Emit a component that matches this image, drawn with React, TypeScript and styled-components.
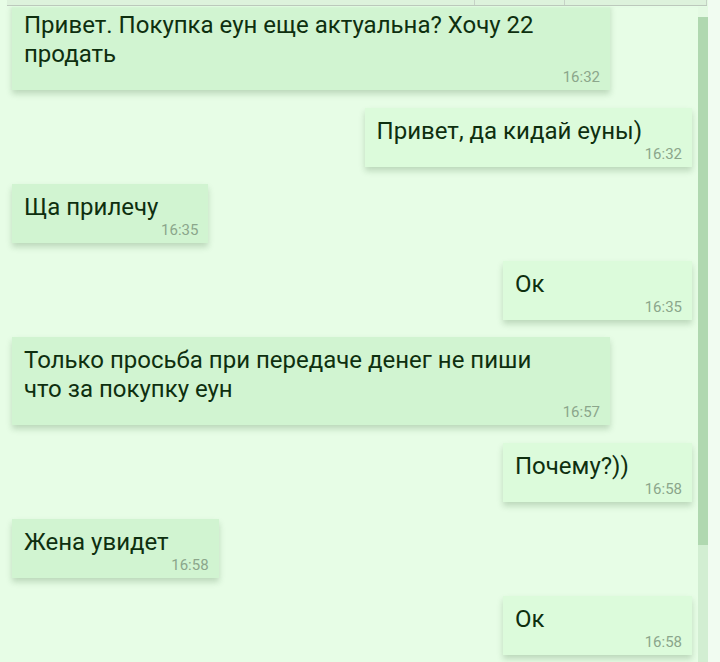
import React from "react";
import styled, { createGlobalStyle } from "styled-components";

const GlobalStyle = createGlobalStyle`
  html, body {
    margin: 0;
    padding: 0;
    background: #e7fde6;
  }
  body {
    font-family: Roboto, "Noto Sans", "Liberation Sans", sans-serif;
  }
`;

const Screen = styled.div`
  position: relative;
  display: flex;
  width: 720px;
  height: 662px;
  overflow: hidden;
  background: #e7fde6;
`;

const TopBar = styled.div`
  position: absolute;
  top: 0;
  left: 7px;
  width: 700px;
  height: 5px;
  display: grid;
  grid-template-columns: 468px 90px 1fr;
  background: #ddf2dc;
  border-bottom: 1px solid #bcc8bc;
  box-shadow: 0 1px 2px rgba(230, 253, 230, 0.9);
  z-index: 2;
`;

const TopCell = styled.div`
  border-right: 1px solid #c6d2c6;
`;

const MessageList = styled.div`
  flex: 1;
  display: flex;
  flex-direction: column;
  gap: 17.5px;
  padding: 2px 6px 0 12px;
`;

const Bubble = styled.div<{ $out?: boolean; $wide?: boolean }>`
  align-self: ${p => (p.$out ? "flex-end" : "flex-start")};
  display: flex;
  flex-direction: column;
  box-sizing: border-box;
  min-width: 189px;
  width: ${p => (p.$wide ? "598px" : "auto")};
  padding: 9px 10px 4px 12px;
  background: ${p => (p.$out ? "#dcfbdb" : "#d1f4d1")};
  box-shadow: 0 4px 6px rgba(40, 90, 40, 0.22);
`;

const Text = styled.div`
  max-width: 515px;
  margin-right: 40px;
  font-size: 24px;
  line-height: 29px;
  color: #0e2f0f;
`;

const Time = styled.div`
  align-self: flex-end;
  font-size: 15px;
  line-height: 17px;
  color: #8ba68b;
`;

const ScrollTrack = styled.div`
  width: 10px;
  display: flex;
  flex-direction: column;
  padding-top: 17px;
  background: linear-gradient(#e4fae3 0 17px, #d2eed2 17px);
`;

const ScrollThumb = styled.div`
  height: 528px;
  background: #b0d8b0;
`;

const Edge = styled.div`
  width: 12px;
  background: #f1fcf1;
`;

type Message = { text: string; time: string; out?: boolean; wide?: boolean };

const messages: Message[] = [
  { text: "Привет. Покупка еун еще актуальна? Хочу 22 продать", time: "16:32", wide: true },
  { text: "Привет, да кидай еуны)", time: "16:32", out: true },
  { text: "Ща прилечу", time: "16:35" },
  { text: "Ок", time: "16:35", out: true },
  {
    text: "Только просьба при передаче денег не пиши что за покупку еун",
    time: "16:57",
    wide: true,
  },
  { text: "Почему?))", time: "16:58", out: true },
  { text: "Жена увидет", time: "16:58" },
  { text: "Ок", time: "16:58", out: true },
];

export default function App() {
  return (
    <>
      <GlobalStyle />
      <Screen>
        <TopBar>
          <TopCell />
          <TopCell />
          <TopCell />
        </TopBar>
        <MessageList>
          {messages.map((m, i) => (
            <Bubble key={i} $out={m.out} $wide={m.wide}>
              <Text>{m.text}</Text>
              <Time>{m.time}</Time>
            </Bubble>
          ))}
        </MessageList>
        <ScrollTrack>
          <ScrollThumb />
        </ScrollTrack>
        <Edge />
      </Screen>
    </>
  );
}
